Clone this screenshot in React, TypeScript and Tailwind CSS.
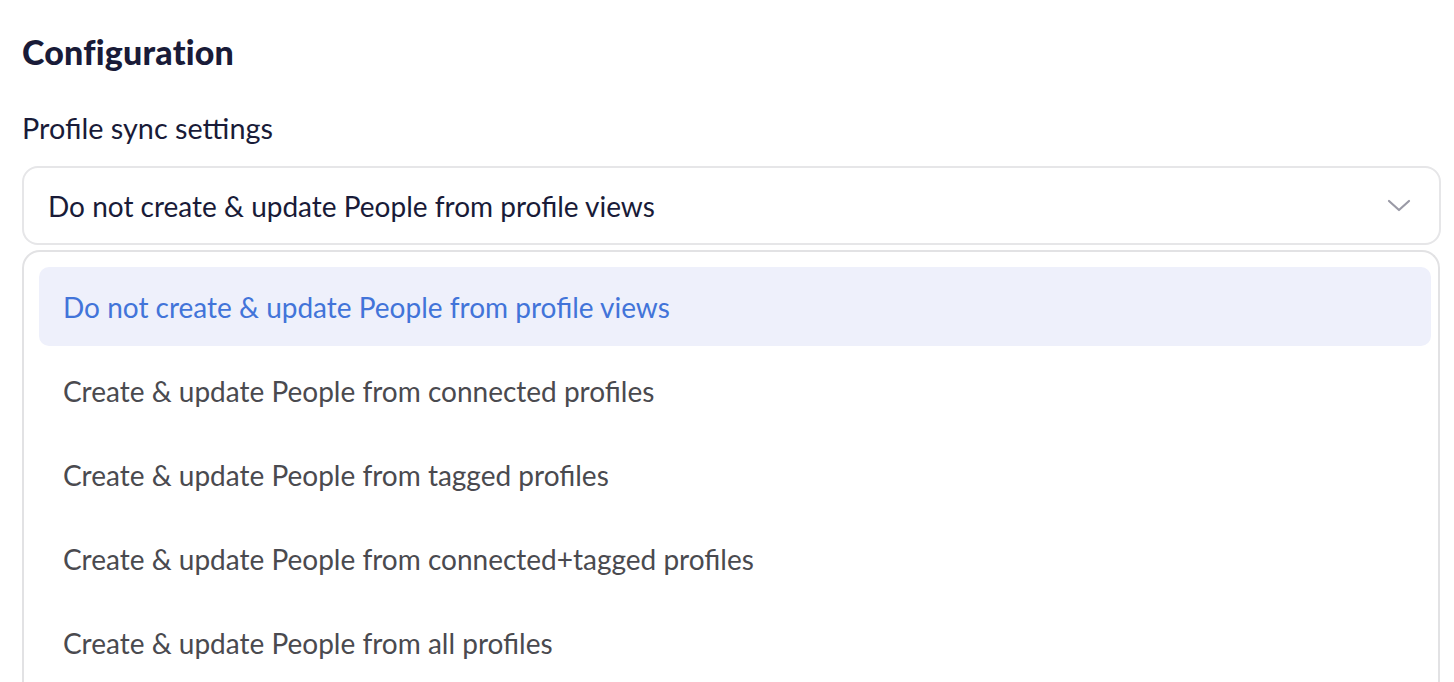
import React from "react";

const items = [
  "Do not create & update People from profile views",
  "Create & update People from connected profiles",
  "Create & update People from tagged profiles",
  "Create & update People from connected+tagged profiles",
  "Create & update People from all profiles",
];

export default function App() {
  return (
    <div
      className="w-[1454px] h-[682px] overflow-hidden bg-white"
      style={{ fontFamily: "Lato, 'Noto Sans', sans-serif" }}
    >
      <div className="pl-[22px] pr-[13px] pt-[30px]">
        <h1 className="text-[34px] leading-[44px] font-black text-[#191b38] tracking-[0.2px]">
          Configuration
        </h1>
        <div className="mt-[36px] text-[28.8px] leading-[36px] text-[#191b38]">
          Profile sync settings
        </div>
        <div className="mt-[20px] h-[79px] rounded-[16px] border-2 border-[#e6e6e8] flex items-center justify-between pl-[24px] pr-[28px]">
          <span className="text-[28px] text-[#191b38]">
            Do not create &amp; update People from profile views
          </span>
          <svg width="24" height="14" viewBox="0 0 24 14" fill="none">
            <path
              d="M2 2 L12 11 L22 2"
              stroke="#9a9aa6"
              strokeWidth="2.2"
              strokeLinecap="round"
              strokeLinejoin="round"
            />
          </svg>
        </div>
        <div className="mt-[5px] mr-px h-[480px] rounded-t-[18px] border-2 border-b-0 border-[#e2e2e4] pt-[15px] pl-[15px] pr-[7px] flex flex-col gap-[5px]">
          {items.map((t, i) => (
            <div
              key={t}
              className={
                i === 0
                  ? "h-[79px] rounded-[10px] bg-[#eef0fb] flex items-center pl-[24px] text-[28px] text-[#4274d9]"
                  : "h-[79px] rounded-[10px] flex items-center pl-[24px] text-[28px] text-[#4a4a4f]"
              }
            >
              {t}
            </div>
          ))}
        </div>
      </div>
    </div>
  );
}
